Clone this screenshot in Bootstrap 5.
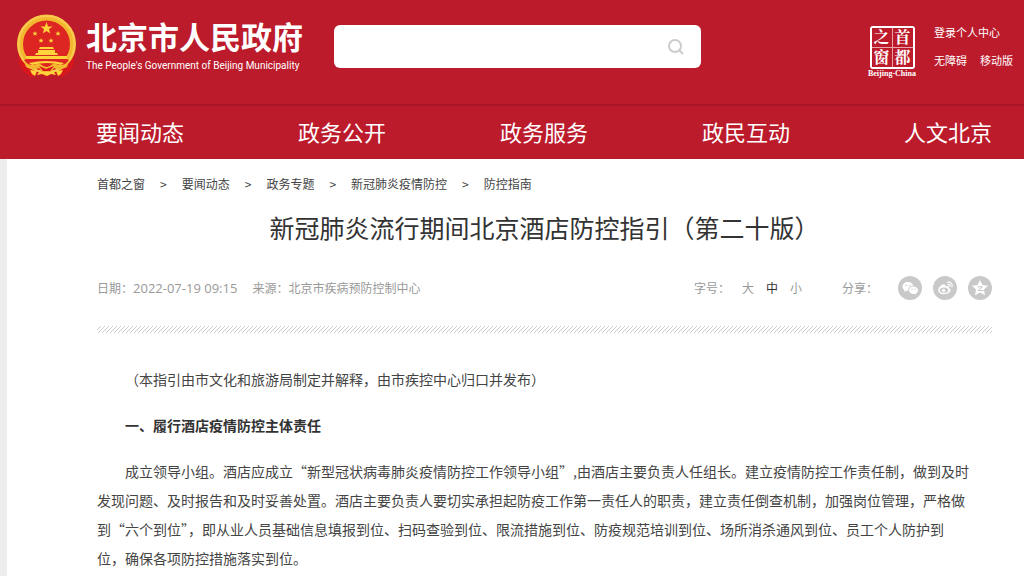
<!DOCTYPE html>
<html lang="zh-CN">
<head>
<meta charset="utf-8">
<meta name="viewport" content="width=device-width, initial-scale=1">
<title>新冠肺炎流行期间北京酒店防控指引（第二十版）</title>
<link rel="stylesheet" href="https://cdn.jsdelivr.net/npm/bootstrap@5.3.0/dist/css/bootstrap.min.css">
<style>
  body { background: #ededed; color: #444; font-family: "Noto Sans CJK SC", sans-serif; font-size: 14px; }
  a { color: inherit; text-decoration: none; }
  .site-header { background: #bc1b2c; color: #fff; }
  .top-row { min-height: 104px; padding: 14px 11px 0 16px; }
  .brand-name { font-size: 31px; line-height: 40px; font-weight: 700; margin-top: 2px; }
  .brand-en { font-family: Roboto, sans-serif; font-size: 10px; line-height: 20px; }
  .brand-text { width: 220px; margin-left: 9px; }
  .site-search { flex: 0 1 367px; margin: 11px 0 0 28px; }
  .site-search .form-control { height: 43px; border: 0; border-radius: 6px; padding-right: 48px; }
  .site-search .btn { right: 16px; top: 13px; line-height: 0; }
  .seal { width: 50px; margin: 12px 17px 0 0; }
  .seal-grid { display: grid; grid-template-columns: 1fr 1fr; gap: 1px; width: 45px; height: 43px; margin: 0 auto; border: 2px solid #fff; border-radius: 3px; background: #e9a4aa; }
  .seal-grid span { background: #bc1b2c; font-family: "Liberation Serif", "Noto Serif CJK SC", "Noto Sans CJK SC", serif; font-size: 16px; line-height: 19px; font-weight: 700; text-align: center; }
  .seal-en { font: 700 8px/9px "Liberation Serif", serif; text-align: center; white-space: nowrap; }
  .user-links { width: 79px; margin-top: 9px; font-size: 11px; line-height: 18px; }
  .user-links > div { margin-top: 10px; }
  .main-nav { border-top: 2px solid #a91526; padding: 0 32px 2px 96px; }
  .main-nav a { font-size: 22px; line-height: 51px; }
  .page-body { background: #fff; margin-left: 7px; padding: 16px 32px 0 90px; }
  .crumbs { font-size: 12px; line-height: 18px; gap: 15px; }
  .doc-title { font-size: 25px; line-height: 38px; margin: 15px 0 30px; font-weight: 400; color: #333; text-align: center; }
  .meta-row { color: #999; font-size: 12px; line-height: 24px; height: 24px; }
  .meta-row time { font-family: "Open Sans", "Noto Sans", sans-serif; font-size: 13px; }
  .meta-row .source { margin-left: 15px; }
  .meta-row .btn { font-size: 12px; line-height: 24px; color: #999; }
  .meta-row .btn.active { color: #333; }
  .share-label { margin-left: 36px; }
  .share { gap: 11px; }
  .share a { display: block; height: 24px; line-height: 0; }
  .hatch { height: 7px; margin: 26px 0 32px; background: linear-gradient(135deg, #fff 38%, #ccc 50%, #fff 62%) 0 0 / 4px 4px; }
  .article p, .article h2 { font-size: 14px; line-height: 29px; margin: 0 0 17px; text-indent: 2em; }
  .article p:last-child { margin-bottom: 0; }
  .article h2 { font-weight: 700; color: #333; }
</style>
</head>
<body class="d-flex flex-column min-vh-100">
<header class="site-header">
  <div class="top-row d-flex align-items-start">
    <a href="#" class="d-flex flex-shrink-0" aria-label="北京市人民政府">
      <svg width="61" height="65" viewBox="0 0 61 65" aria-hidden="true">
        <path d="M3 40 3 50 8 58 15 63 24 59 30 63 37 59 46 63 53 58 58 50 58 40Z" fill="#d8171c"/>
        <circle cx="30.500" cy="30" r="26.500" fill="#dd2622" stroke="#f3b62f" stroke-width="6"/>
        <circle cx="30.500" cy="30" r="28" fill="none" stroke="#f9cc50" stroke-width="2"/>
        <path d="M8 46Q30 35 53 46L47 53Q30 60 14 53Z" fill="#dd2622"/>
        <g fill="#ffd43b">
          <path d="m30.500 8 1.500 4.400h4.600l-3.700 2.800 1.400 4.400-3.800-2.700-3.800 2.700 1.400-4.400-3.700-2.800H29z"/>
          <path id="st" d="m19 17 .7 1.700h1.900l-1.500 1.200.6 1.900-1.700-1.100-1.700 1.100.6-1.900-1.500-1.200h1.900z"/>
          <use href="#st" x="23"/><use href="#st" x="6" y="7"/><use href="#st" x="16" y="7"/>
          <path d="M23 35l1-2h13l1 2zM22 36h17v3h2l1 2H19l1-2h2zM19 42h23v1H19zM10 42h41v3H10z"/>
          <path d="M13 49q17-4 35 0l-3 2q-14-4-29 0z"/>
        </g>
        <path d="M8 47Q15 54 23 49Q28 53 30.500 53Q33 53 38 49Q46 54 53 47L51 53Q43 57 38 54L35 58H26L23 54Q16 57 10 53Z" fill="#f3b62f"/>
        <path d="M14 56l7 1-2 5-3-2zM47 56l-7 1 2 5 3-2zM23 58h15l2 3-5-1-4 2-5-2-5 1z" fill="#ffd43b"/>
        <path d="M23 52l7 3 8-3-4 5h-7z" fill="#d8171c"/>
      </svg>
      <span class="brand-text text-nowrap">
        <span class="brand-name d-block">北京市人民政府</span>
        <span class="brand-en d-block">The People's Government of Beijing Municipality</span>
      </span>
    </a>
    <form class="site-search position-relative" role="search">
      <input class="form-control" type="search" aria-label="搜索">
      <button class="btn p-0 border-0 position-absolute" type="button" aria-label="搜索">
        <svg width="18" height="18" viewBox="0 0 18 18" fill="none" stroke="#ccc" stroke-width="2"><circle cx="8" cy="8" r="6"/><path d="m12.500 12.500 3.500 3.500"/></svg>
      </button>
    </form>
    <a href="#" class="seal ms-auto flex-shrink-0">
      <span class="seal-grid"><span>之</span><span>首</span><span>窗</span><span>都</span></span>
      <span class="seal-en d-block">Beijing-China</span>
    </a>
    <div class="user-links flex-shrink-0">
      <a href="#" class="d-block">登录个人中心</a>
      <div class="d-flex justify-content-between"><a href="#">无障碍</a><a href="#">移动版</a></div>
    </div>
  </div>
  <nav class="main-nav d-flex justify-content-between">
    <a href="#">要闻动态</a><a href="#">政务公开</a><a href="#">政务服务</a><a href="#">政民互动</a><a href="#">人文北京</a>
  </nav>
</header>
<main class="page-body flex-grow-1">
  <nav class="crumbs d-flex" aria-label="面包屑">
    <a href="#">首都之窗</a><span>&gt;</span><a href="#">要闻动态</a><span>&gt;</span><a href="#">政务专题</a><span>&gt;</span><a href="#">新冠肺炎疫情防控</a><span>&gt;</span><a href="#">防控指南</a>
  </nav>
  <h1 class="doc-title">新冠肺炎流行期间北京酒店防控指引（第二十版）</h1>
  <div class="meta-row d-flex">
    <span>日期：<time datetime="2022-07-19T09:15">2022-07-19 09:15</time></span>
    <span class="source">来源：北京市疾病预防控制中心</span>
    <div class="d-flex ms-auto">
      <span class="me-1">字号：</span>
      <div class="d-flex align-items-start gap-2 ps-1">
        <button type="button" class="btn p-0 border-0 px-1">大</button>
        <button type="button" class="btn p-0 border-0 active">中</button>
        <button type="button" class="btn p-0 border-0 px-1">小</button>
      </div>
    </div>
    <span class="share-label">分享：</span>
    <div class="share d-flex ms-3 ps-1">
      <a href="#" aria-label="微信"><svg width="24" height="24" viewBox="0 0 24 24"><circle cx="12" cy="12" r="12" fill="#c9c9c9"/><path d="M10 6c-3.300 0-5.500 2-5.500 4.500 0 1.400.7 2.600 1.900 3.400L6 15.800l2.200-1.100 2 .3c-.5-3 2-5 5-5C14.800 7.600 12.700 6 10 6z" fill="#fff"/><path d="M15.500 10.500c-2.500 0-4.500 1.600-4.500 3.700s2 3.700 4.500 3.700l1.400-.2 1.700.9-.4-1.500c1.100-.7 1.800-1.700 1.800-2.900 0-2.100-2-3.700-4.500-3.700z" fill="#fff"/><g fill="#c9c9c9"><circle cx="8.200" cy="9.300" r=".7"/><circle cx="11.800" cy="9.300" r=".7"/><circle cx="14" cy="13.200" r=".6"/><circle cx="17" cy="13.200" r=".6"/></g></svg></a>
      <a href="#" aria-label="微博"><svg width="24" height="24" viewBox="0 0 24 24"><circle cx="12" cy="12" r="12" fill="#c9c9c9"/><path d="M10.500 8.200c-2 .3-5.300 3.200-5.300 6 0 2.500 2.900 4 5.900 4 3.900 0 6.400-2.200 6.400-4.200 0-1.200-1-1.800-1.700-2 .6-1.800-.8-2.500-3.300-1.400.4-1.500-.3-2.600-2-2.400z" fill="#fff"/><ellipse cx="11" cy="14.300" rx="4.200" ry="2.700" fill="#c9c9c9"/><circle cx="10.600" cy="14.500" r="1.800" fill="#fff"/><path d="M14.500 6.200c3-.7 5.500 1.800 4.500 4.700M14.800 8.500c1.600-.2 2.500.8 2.200 2" stroke="#fff" fill="none" stroke-width="1.200" stroke-linecap="round"/></svg></a>
      <a href="#" aria-label="QQ空间"><svg width="24" height="24" viewBox="0 0 24 24"><circle cx="12" cy="12" r="12" fill="#c9c9c9"/><path d="m12 4 2.400 5.100 5.600.7-4.100 3.900 1.100 5.600-5-2.700-5 2.700 1.100-5.600L4 9.800l5.600-.7z" fill="#fff"/><path d="M9.500 10.800h5l-4.500 3.700h5.500" fill="none" stroke="#c9c9c9" stroke-width="1"/></svg></a>
    </div>
  </div>
  <div class="hatch"></div>
  <article class="article">
    <p>（本指引由市文化和旅游局制定并解释，由市疾控中心归口并发布）</p>
    <h2>一、履行酒店疫情防控主体责任</h2>
    <p>成立领导小组。酒店应成立“新型冠状病毒肺炎疫情防控工作领导小组”,由酒店主要负责人任组长。建立疫情防控工作责任制，做到及时<br>发现问题、及时报告和及时妥善处置。酒店主要负责人要切实承担起防疫工作第一责任人的职责，建立责任倒查机制，加强岗位管理，严格做<br>到“六个到位”，即从业人员基础信息填报到位、扫码查验到位、限流措施到位、防疫规范培训到位、场所消杀通风到位、员工个人防护到<br>位，确保各项防控措施落实到位。</p>
  </article>
</main>
<script src="https://cdn.jsdelivr.net/npm/bootstrap@5.3.0/dist/js/bootstrap.bundle.min.js"></script>
</body>
</html>
